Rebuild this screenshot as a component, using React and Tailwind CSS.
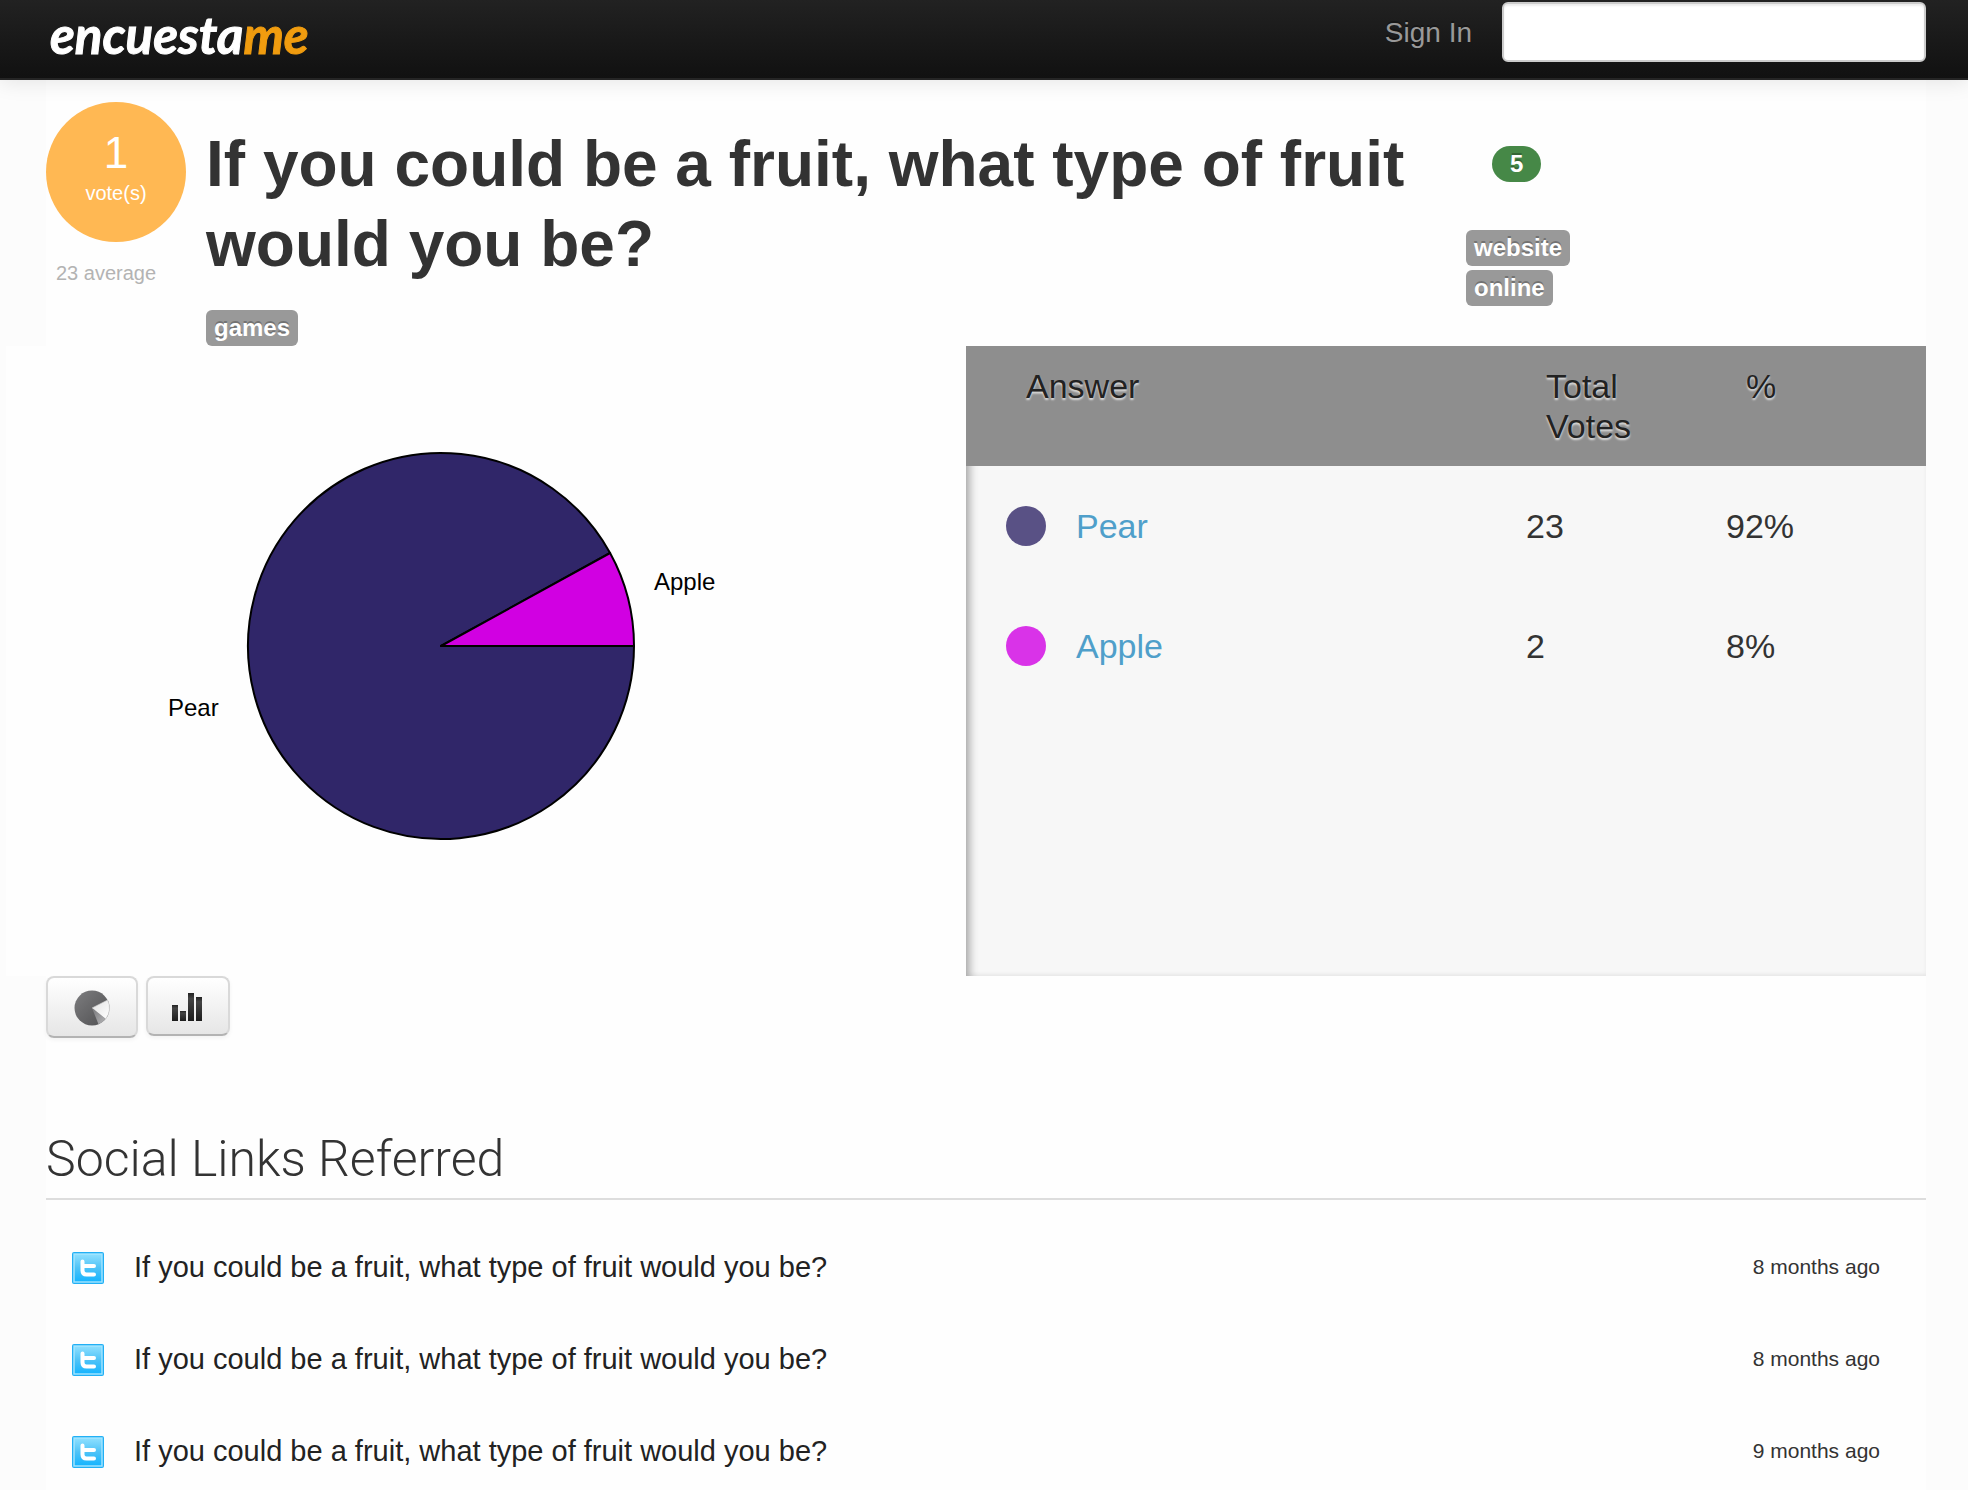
const SLICES = [
  { name: 'Pear', votes: 23, percent: '92%', dot: 'bg-[#595185]' },
  { name: 'Apple', votes: 2, percent: '8%', dot: 'bg-[#d933e8]' },
];

const LINKS = [
  { id: 1, age: '8 months ago' },
  { id: 2, age: '8 months ago' },
  { id: 3, age: '9 months ago' },
];

const QUESTION = 'If you could be a fruit, what type of fruit would you be?';

function Tag({ children }) {
  return (
    <a
      href="#tag"
      className="rounded-md bg-[#999] px-2 py-1 text-2xl leading-7 font-bold text-white [text-shadow:0_-2px_0_rgba(0,0,0,0.25)]"
    >
      {children}
    </a>
  );
}

function NavBar() {
  return (
    <header className="flex h-20 items-start justify-between border-b-2 border-[#252525] bg-linear-to-b from-[#222] to-[#111] pr-[42px] pl-[50px] shadow-[0_2px_20px_rgba(0,0,0,0.1)]">
      <a
        href="#home"
        className="text-[51px] leading-[70px] font-bold text-white italic [-webkit-text-stroke:1px_currentColor] [font-family:Lato,'Liberation_Sans',sans-serif]"
      >
        encuesta<span className="text-[#f09c0f]">me</span>
      </a>
      <div className="flex items-start gap-[30px] pt-[2px]">
        <a href="#signin" className="text-[28px] leading-[62px] text-[#999] [text-shadow:0_-2px_0_rgba(0,0,0,0.25)]">
          Sign In
        </a>
        <input
          type="text"
          aria-label="Search"
          className="h-[60px] w-[424px] rounded-md border-2 border-[#ccc] bg-white px-3 text-[28px] shadow-[inset_0_2px_2px_rgba(0,0,0,0.075)]"
        />
      </div>
    </header>
  );
}

function VoteSummary() {
  return (
    <div className="flex w-[140px] shrink-0 flex-col">
      <div className="flex h-[140px] flex-col items-center rounded-full bg-[#ffb853] pt-[26px] text-white">
        <span className="text-[44px] leading-[50px]">1</span>
        <span className="text-xl leading-[30px]">vote(s)</span>
      </div>
      <span className="mt-4 pl-[10px] text-xl leading-[30px] text-[#b3b3b3]">23 average</span>
    </div>
  );
}

function PollHeader() {
  return (
    <section className="flex pt-[22px]">
      <VoteSummary />
      <div className="flex min-w-0 flex-1 flex-col items-start gap-[26px] pt-[22px] pl-5">
        <h1 className="text-[64px] leading-[80px] font-bold text-[#333]">{QUESTION}</h1>
        <Tag>games</Tag>
      </div>
      <div className="flex w-[460px] shrink-0 flex-col items-start gap-1 pt-11">
        <span className="mb-11 ml-[26px] rounded-full bg-[#468847] px-[18px] py-1 text-2xl leading-7 font-bold text-white [text-shadow:0_-2px_0_rgba(0,0,0,0.25)]">
          5
        </span>
        <Tag>website</Tag>
        <Tag>online</Tag>
      </div>
    </section>
  );
}

function PieChart() {
  return (
    <svg
      width="640"
      height="630"
      viewBox="0 0 640 630"
      role="img"
      aria-label="Votes by answer"
      className="ml-[110px] [font-family:'Liberation_Sans',Arial,sans-serif] text-2xl"
    >
      <g stroke="#000" strokeWidth="2" strokeLinejoin="round">
        <path d="M325 300 L518 300 A193 193 0 1 1 494.1 207 Z" fill="#302669" />
        <path d="M325 300 L494.1 207 A193 193 0 0 1 518 300 Z" fill="#d100e2" />
      </g>
      <text x="538" y="244">Apple</text>
      <text x="52" y="370">Pear</text>
    </svg>
  );
}

function ResultsTable() {
  return (
    <div className="bg-[#f7f7f7] shadow-[inset_10px_0_8px_-6px_rgba(0,0,0,0.3),inset_0_-2px_4px_rgba(0,0,0,0.05)]">
      <table className="w-full table-fixed border-collapse text-left text-[34px] leading-10 text-[#333]">
        <colgroup>
          <col className="w-7/12" />
          <col />
          <col />
        </colgroup>
        <thead>
          <tr className="bg-[#8e8e8e] align-top text-[#222] [text-shadow:0_2px_2px_rgba(255,255,255,0.7)]">
            <th className="py-5 pl-[60px] font-normal">Answer</th>
            <th className="py-5 pl-5 font-normal">
              Total
              <br />
              Votes
            </th>
            <th className="py-5 pl-5 font-normal">%</th>
          </tr>
        </thead>
        <tbody>
          {SLICES.map((s) => (
            <tr key={s.name}>
              <td className="py-10 pl-10">
                <div className="flex items-center gap-[30px]">
                  <span className={`size-10 rounded-full ${s.dot}`} />
                  <a href="#answer" className="text-[#4f9fca]">
                    {s.name}
                  </a>
                </div>
              </td>
              <td className="py-10">{s.votes}</td>
              <td className="py-10">{s.percent}</td>
            </tr>
          ))}
        </tbody>
      </table>
    </div>
  );
}

const CHART_BUTTON =
  'flex items-center justify-center rounded-lg border-2 border-[#d9d9d9] border-b-[#b3b3b3] bg-linear-to-b from-white to-[#e6e6e6] pt-[2px] shadow-[0_2px_4px_rgba(0,0,0,0.05)]';

function ChartButtons() {
  return (
    <div className="flex items-start gap-2">
      <button type="button" aria-label="Pie chart" className={`${CHART_BUTTON} h-[62px] w-[92px]`}>
        <svg width="36" height="36" viewBox="0 0 36 36">
          <defs>
            <linearGradient id="pieBody" x1="0" y1="0" x2="1" y2="1">
              <stop offset="0" stopColor="#7d7d7f" />
              <stop offset="1" stopColor="#4f4f51" />
            </linearGradient>
            <linearGradient id="pieCut" x1="0" y1="0" x2="1" y2="1">
              <stop offset="0" stopColor="#e2e2e2" />
              <stop offset="1" stopColor="#ffffff" />
            </linearGradient>
            <linearGradient id="pieShade" x1="0" y1="0" x2="1" y2="1">
              <stop offset="0" stopColor="#77777a" />
              <stop offset="1" stopColor="#b5b5b7" />
            </linearGradient>
          </defs>
          <circle cx="18" cy="18" r="17.5" fill="url(#pieBody)" />
          <path d="M18 18 L33.6 10 A17.5 17.5 0 0 1 31.6 29 Z" fill="url(#pieCut)" stroke="#c9c9c9" strokeWidth="0.6" />
          <path d="M18 18 L31.6 29 A17.5 17.5 0 0 1 24.5 34.2 Z" fill="url(#pieShade)" />
        </svg>
      </button>
      <button type="button" aria-label="Bar chart" className={`${CHART_BUTTON} h-[60px] w-[84px]`}>
        <svg width="32" height="30" viewBox="0 0 32 30">
          <defs>
            <linearGradient id="bar" x1="0" y1="0" x2="0" y2="1">
              <stop offset="0" stopColor="#222" />
              <stop offset="0.2" stopColor="#444" />
              <stop offset="1" stopColor="#1c1c1c" />
            </linearGradient>
          </defs>
          <rect x="0" y="13" width="6" height="16" fill="url(#bar)" />
          <rect x="8" y="19" width="6" height="10" fill="url(#bar)" />
          <rect x="16" y="1" width="6" height="28" fill="url(#bar)" />
          <rect x="24" y="5" width="6" height="24" fill="url(#bar)" />
        </svg>
      </button>
    </div>
  );
}

function TwitterIcon() {
  return (
    <svg width="32" height="32" viewBox="0 0 32 32" aria-hidden="true" className="mt-1 shrink-0">
      <defs>
        <linearGradient id="tw" x1="0" y1="0" x2="0" y2="1">
          <stop offset="0" stopColor="#8fe0ff" />
          <stop offset="0.5" stopColor="#4fc3f7" />
          <stop offset="1" stopColor="#14b4ff" />
        </linearGradient>
      </defs>
      <rect width="32" height="32" rx="2" fill="#22b0f5" />
      <rect x="2" y="2" width="28" height="28" fill="url(#tw)" stroke="#a5e6ff" strokeWidth="1.4" />
      <path
        d="M10.5 9.5 V18.5 Q10.5 22.5 14.5 22.5 H22 M10.5 14 H22"
        fill="none"
        stroke="#fff"
        strokeWidth="4"
        strokeLinecap="round"
        strokeLinejoin="round"
      />
    </svg>
  );
}

function SocialLinks() {
  return (
    <section className="pt-[85px]">
      <h2 className="border-b-2 border-[#ddd] pb-[3px] text-[50px] leading-[72px] font-light text-[#333] [font-family:Roboto,'Liberation_Sans',sans-serif]">
        Social Links Referred
      </h2>
      <ul className="flex flex-col gap-[18px] pt-[30px] pb-0.5">
        {LINKS.map((link) => (
          <li key={link.id} className="flex items-start py-[18px] pr-[46px] pl-[26px] leading-[38px]">
            <TwitterIcon />
            <a href="#tweet" className="ml-[30px] flex-1 text-[29px] text-[#222]">
              {QUESTION}
            </a>
            <span className="text-[21px] text-[#333]">{link.age}</span>
          </li>
        ))}
      </ul>
    </section>
  );
}

export default function App() {
  return (
    <div className="bg-[#fcfcfc] [font-family:'Liberation_Sans',Arial,sans-serif]">
      <div className="relative">
        <NavBar />
      </div>
      <main className="mr-[42px] ml-[46px] bg-[#fefefe]">
        <PollHeader />
        <section className="-ml-10 grid grid-cols-2 bg-[#fefefe]">
          <PieChart />
          <ResultsTable />
        </section>
        <ChartButtons />
        <SocialLinks />
      </main>
    </div>
  );
}
